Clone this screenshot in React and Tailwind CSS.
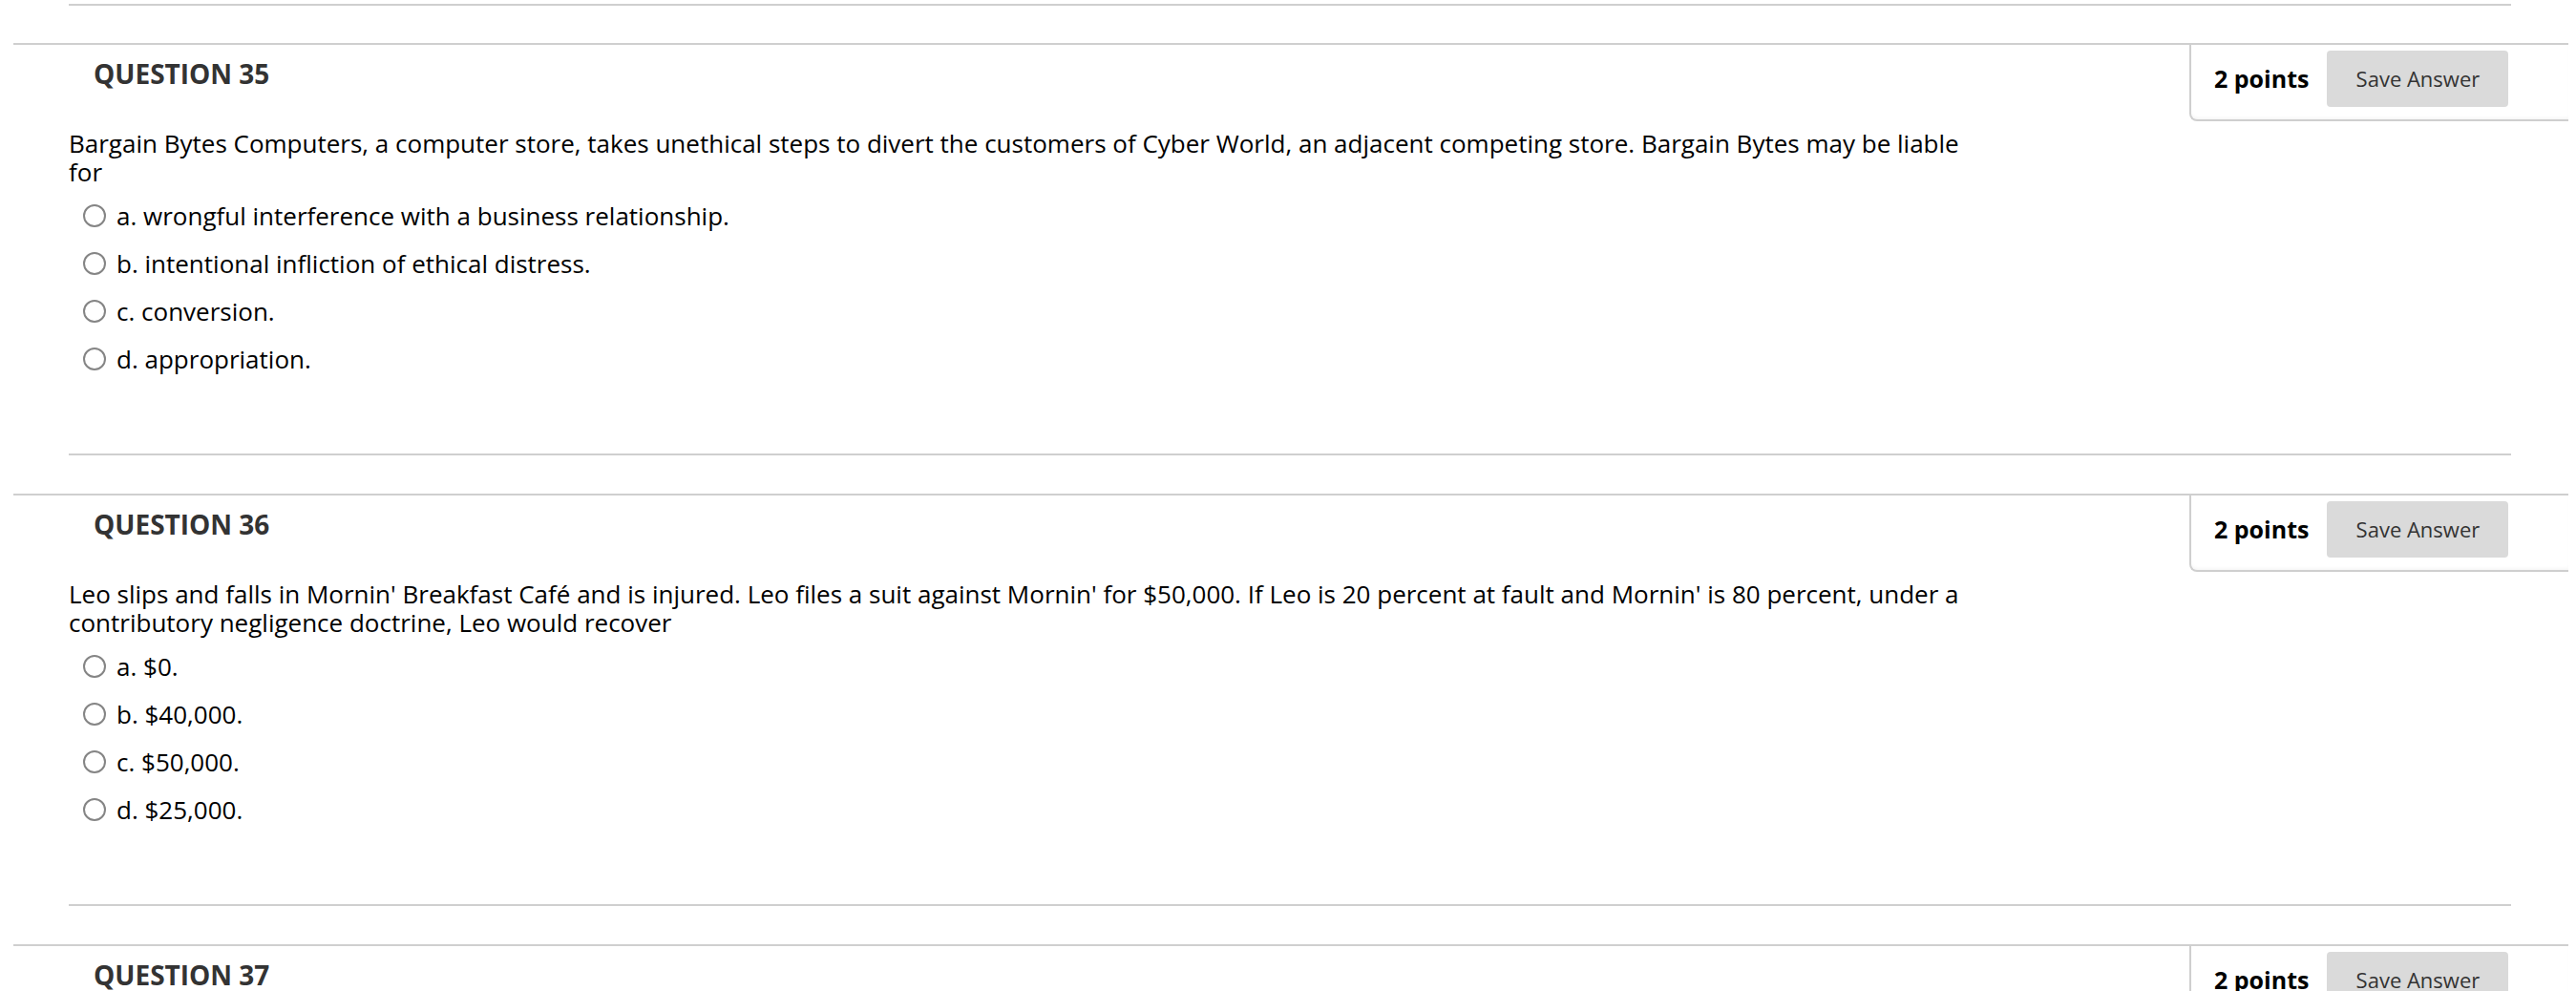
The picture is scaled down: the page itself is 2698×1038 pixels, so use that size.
import React from "react"

const QUESTIONS = [
  {
    num: 35,
    points: 2,
    text: "Bargain Bytes Computers, a computer store, takes unethical steps to divert the customers of Cyber World, an adjacent competing store. Bargain Bytes may be liable for",
    options: [
      "a. wrongful interference with a business relationship.",
      "b. intentional infliction of ethical distress.",
      "c. conversion.",
      "d. appropriation.",
    ],
  },
  {
    num: 36,
    points: 2,
    text: "Leo slips and falls in Mornin' Breakfast Café and is injured. Leo files a suit against Mornin' for $50,000. If Leo is 20 percent at fault and Mornin' is 80 percent, under a contributory negligence doctrine, Leo would recover",
    options: ["a. $0.", "b. $40,000.", "c. $50,000.", "d. $25,000."],
  },
  {
    num: 37,
    points: 2,
    text: "",
    options: [],
  },
]

function Radio() {
  return <span className="block h-[24px] w-[24px] shrink-0 rounded-full border-2 border-[#858585] bg-white" />
}

function PointsBox({ points }) {
  return (
    <div className="flex h-[80px] w-[397px] shrink-0 items-start rounded-bl-[8px] border-b-2 border-l-2 border-[#cfcfcf] pl-[24px] pr-[60px] pt-[6px] shadow-[inset_0_-3px_5px_-3px_rgba(0,0,0,0.08)]">
      <div className="flex h-[59px] items-center gap-[19px]">
        <span className="text-[25px] font-bold text-black">{points} points</span>
        <button className="h-[59px] w-[190px] rounded-[4px] bg-[#dadada] text-[22px] text-[#333]">Save Answer</button>
      </div>
    </div>
  )
}

function Question({ q }) {
  return (
    <section className="border-t-2 border-[#cfcfcf]">
      <div className="flex items-start justify-between">
        <h3 className="pl-[84px] pt-[12px] text-[28px] font-bold leading-[36px] text-[#333]">QUESTION {q.num}</h3>
        <PointsBox points={q.points} />
      </div>
      <div className="ml-[58px] mr-[60px] border-b-2 border-[#cfcfcf] pb-[74px]">
        <p className="mt-[8px] max-w-[2000px] text-[26px] leading-[30px] text-black">{q.text}</p>
        <ul className="mt-[6px]">
          {q.options.map((o) => (
            <li key={o} className="flex h-[50px] items-center gap-[11px] pl-[15px] text-[26px] text-black">
              <Radio />
              <span>{o}</span>
            </li>
          ))}
        </ul>
      </div>
    </section>
  )
}

export default function App() {
  return (
    <div className="min-h-screen bg-white font-['Open_Sans',sans-serif]">
      <div className="ml-[72px] mr-[68px] h-[6px] border-b-2 border-[#cfcfcf]" />
      <div className="ml-[14px] mr-[8px] flex flex-col gap-[40px] pt-[39px]">
        {QUESTIONS.map((q) => (
          <Question key={q.num} q={q} />
        ))}
      </div>
    </div>
  )
}
